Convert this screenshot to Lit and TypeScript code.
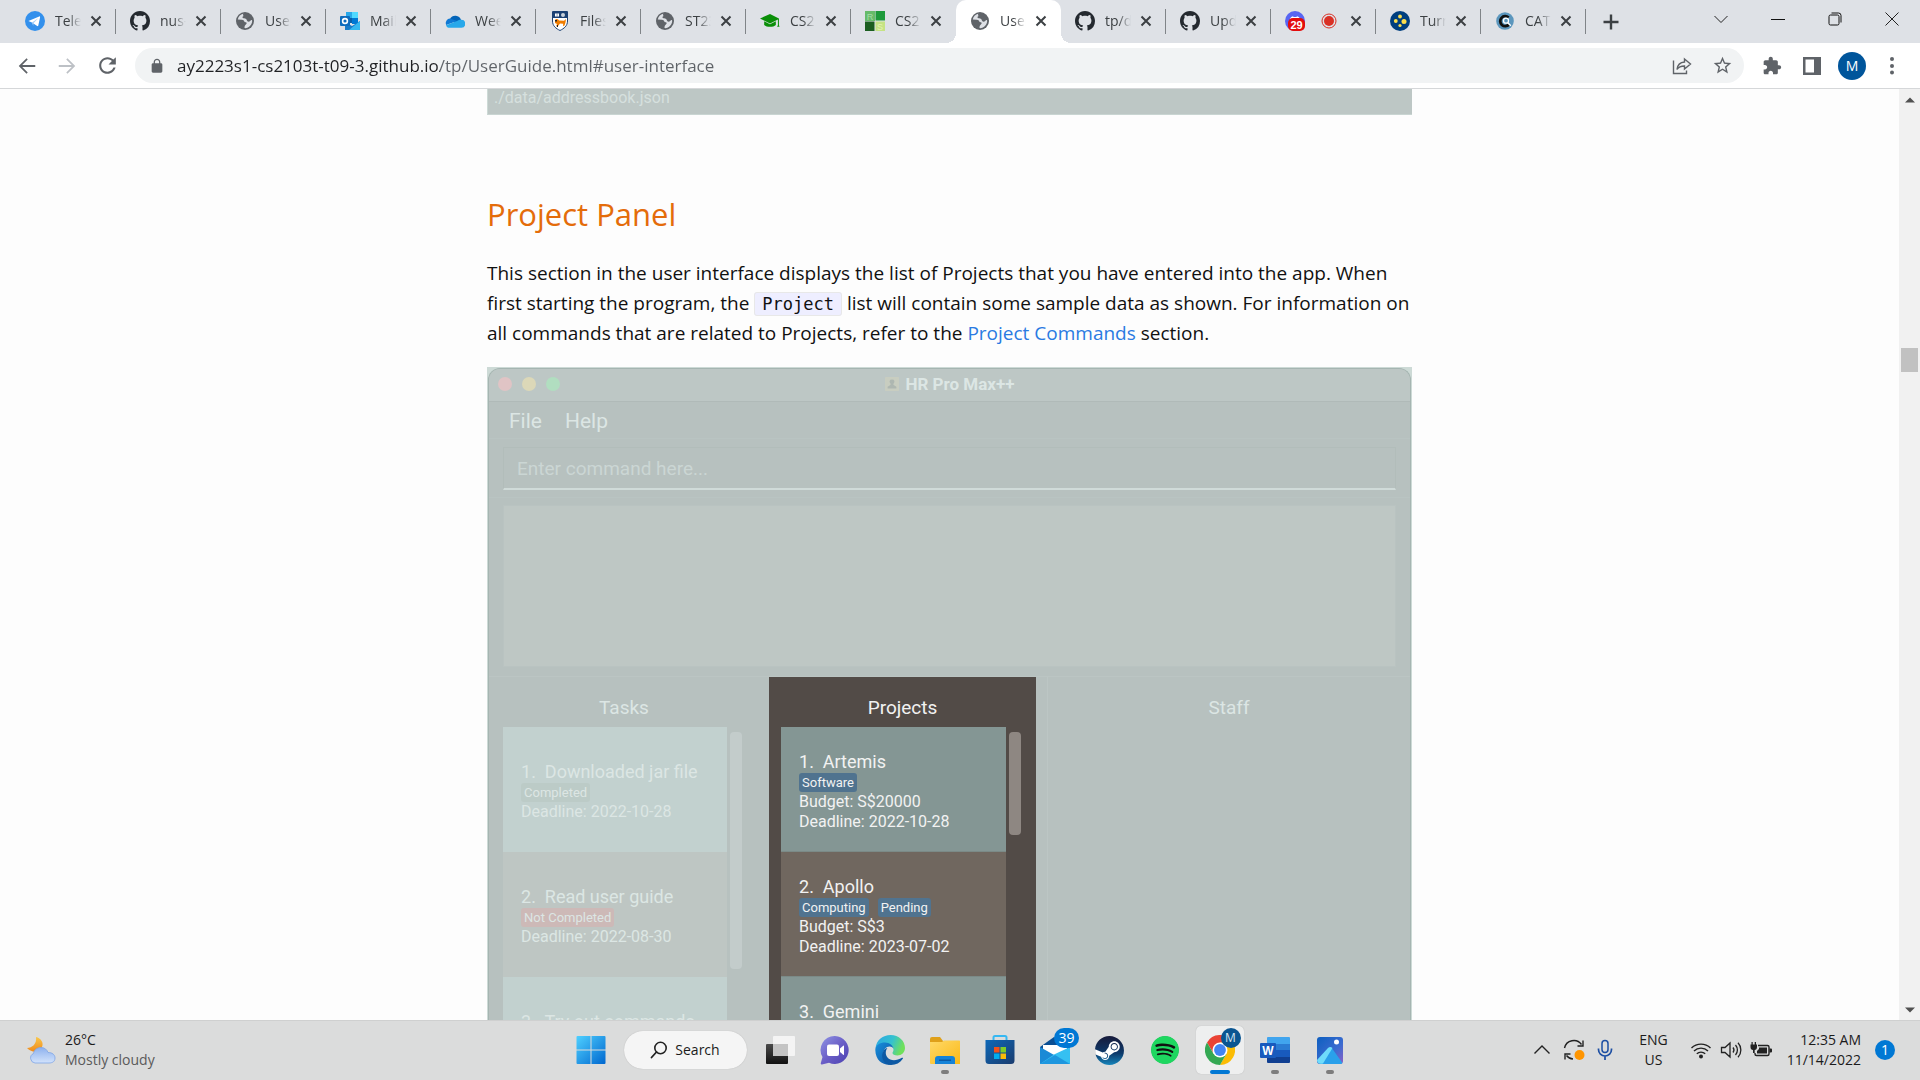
import { LitElement, html, svg, css, nothing, TemplateResult } from "lit";
import { customElement } from "lit/decorators.js";
import { classMap } from "lit/directives/class-map.js";

const icon = (box: string, w: number, h: number, body: unknown) =>
  html`<svg viewBox=${box} width=${w} height=${h} aria-hidden="true">${body}</svg>`;

/* ---------- favicons ---------- */

const github = icon("0 0 16 16", 20, 20, svg`<path fill="#24292f" d="M8 0C3.58 0 0 3.58 0 8c0 3.54 2.29 6.53 5.47 7.59.4.07.55-.17.55-.38 0-.19-.01-.82-.01-1.49-2.01.37-2.53-.49-2.69-.94-.09-.23-.48-.94-.82-1.13-.28-.15-.68-.52-.01-.53.63-.01 1.08.58 1.23.82.72 1.21 1.87.87 2.33.66.07-.52.28-.87.51-1.07-1.78-.2-3.64-.89-3.64-3.95 0-.87.31-1.59.82-2.15-.08-.2-.36-1.02.08-2.12 0 0 .67-.21 2.2.82.64-.18 1.32-.27 2-.27s1.36.09 2 .27c1.53-1.04 2.2-.82 2.2-.82.44 1.1.16 1.92.08 2.12.51.56.82 1.27.82 2.15 0 3.07-1.87 3.75-3.65 3.95.29.25.54.73.54 1.48 0 1.07-.01 1.93-.01 2.2 0 .21.15.46.55.38A8.01 8.01 0 0 0 16 8c0-4.42-3.58-8-8-8z"/>`);

const globe = icon("0 0 20 20", 20, 20, svg`
  <circle cx="10" cy="10" r="9" fill="#5f6368"/>
  <path fill="#dee1e6" d="M8.300 2.800C5.400 3.500 3.200 5.800 2.800 8.600l4 .2c1.700.1 2.700 1 2.700 2.300l1.300.1c.9.100 1 .9.700 1.500l-1.300 1.500c-.5.600-.7 1.200-.7 2.900 1.900.3 4.300-.6 5.600-2.300 1.600-1.900 2.300-3.700 2-5.600-.9-.4-1.300.1-1.900.7-1 1.100-2.500 1-3.100-.1l-.9-1.700c-.5-.8-1.900-.8-2.600-.9-1.400-.2-1.500-1.800-.1-2 .6-.1.900-.6.700-1.200z"/>
  <path fill="#5f6368" d="M8 3c2-.6 5 .1 6.500 1.700-.4 1.300-1.500 1.500-2.500 1.300-1.200-.2-2.200.3-3.500-.2z"/>`);

const telegram = icon("0 0 20 20", 20, 20, svg`
  <circle cx="10" cy="10" r="10" fill="#3390ec"/>
  <path fill="#fff" d="M3.400 9.900 14.200 5.400c.6-.2 1 .1.900.8l-1.800 8.400c-.1.600-.6.800-1.100.5L6.900 11.400z"/>
  <path fill="#a9cff5" d="m6.900 11.400 6.300-4.100-4.700 4.900-.3 2.700z"/>`);

const outlook = icon("0 0 20 20", 20, 20, svg`
  <path fill="#0a5ea8" d="M6 1h12v11H6z"/><path fill="#28a8ea" d="M6 1h6v6H6z"/><path fill="#50d9ff" d="M12 1h6v6h-6z"/>
  <path fill="#0078d4" d="M12 7h6v6h-6z"/><path fill="#1a7cc9" d="M5 11l7 4 8-5v8a1 1 0 0 1-1 1H5z"/><path fill="#35b8f1" d="M20 10v8a1 1 0 0 1-1 1H9z"/>
  <rect y="5" width="10" height="10" rx="1" fill="#0f6cbd"/><circle cx="5" cy="10" r="2.400" fill="none" stroke="#fff" stroke-width="1.600"/>`);

const onedrive = icon("0 0 20 20", 20, 20, svg`
  <path fill="#0364b8" d="M5 8a6 6 0 0 1 11 1l-5 4z"/><path fill="#0f78d4" d="M5 7.600A4.500 4.500 0 0 0 1.200 14L12 10z"/>
  <path fill="#28a8ea" d="M1 14.300C2 17 4 16.800 5 16.800h11a4 4 0 0 0 .5-8c-1.900-.1-3 .4-4.500 1.200z"/>`);

const crest = icon("0 0 20 20", 20, 20, svg`
  <path fill="#fff" stroke="#1c4173" d="M2.500.5h15V10c0 5-3.500 7.500-7.500 9.500C6 17.500 2.500 15 2.500 10z"/>
  <path fill="#1c4173" d="M3 1h14v6H3z"/><path fill="#fff" d="M5 2.500h4v3H5z"/><circle cx="13" cy="4" r="2" fill="#c9d1db"/><path fill="#1c4173" d="M6.800 2.500h.5v3h-.5z"/>
  <path fill="#ef7c00" d="M5 9c1-1.500 3-1 4 .5l5 .2 2-1.700-.5 3.500-1 3-1.500.8.200-2.500-3.200-.3-2 2.500-2 .5 1-2.500L5 12z"/><path fill="#222" d="M5 9h2v1.500H5zM7 14h1v2H7z"/>`);

const cap = icon("0 0 24 24", 20, 20, svg`<path fill="#0a8f08" d="M5 12.200v4.500c3 3 11 3 14 0v-4.500l-7 3.600zM12 3.500 0 9l12 6 9.500-4.700V17l-1 2h3l-.8-2V9z"/>`);

const rs = icon("0 0 20 20", 20, 20, svg`
  <path fill="#66bb6a" d="M0 0h10v10H0z"/><path fill="#1e9a3b" d="M10.500 0H20v9.500h-9.500z"/><path fill="#1b5e20" d="M0 10.500h9.500V20H0z"/><path fill="#c5e384" d="M10.500 10.500H20V20h-9.500z"/>
  <text x="5" y="8.500" font-family="Liberation Sans" font-size="9" text-anchor="middle" fill="#a5dba8">R</text><text x="15" y="18.500" font-family="Liberation Sans" font-size="9" text-anchor="middle" fill="#e6f3b5">S</text>`);

const discord = icon("0 0 20 20", 20, 20, svg`
  <circle cx="10" cy="10" r="10" fill="#5865f2"/><path fill="#fff" d="M5 9c0-2 1-3.500 3-3.800l.6.900h2.800l.6-.9c2 .3 3 1.800 3 3.800z"/>
  <rect x="3" y="7" width="17" height="13" rx="5" fill="#e40d0d"/><text x="11.500" y="17.500" font-family="Liberation Sans" font-weight="bold" font-size="11" text-anchor="middle" fill="#fff">29</text>`);

const turnitin = icon("0 0 20 20", 20, 20, svg`
  <circle cx="10" cy="10" r="10" fill="#003f7f"/><g fill="#fcdf4d"><circle cx="10" cy="5.500" r="1.900"/><circle cx="5.800" cy="10" r="1.900"/><circle cx="14" cy="10.500" r="2.500"/><circle cx="10" cy="14.500" r="1.600"/></g>`);

const catme = icon("0 0 20 20", 20, 20, svg`
  <circle cx="10" cy="10" r="8.800" fill="#5b96bd"/><path d="M13.600 6.500A5 5 0 1 0 14 13.500" fill="none" stroke="#111" stroke-width="2.800"/>
  <circle cx="11" cy="9.700" r="2.500" fill="#5b96bd" stroke="#fff" stroke-width="1.300"/><path stroke="#fff" stroke-width="1.500" d="m12.800 11.700 3 3"/>`);

const record = icon("0 0 16 16", 16, 16, svg`<circle cx="8" cy="8" r="7" fill="none" stroke="#d93025"/><circle cx="8" cy="8" r="5" fill="#d93025"/>`);

const closeX = icon("0 0 12 12", 12, 12, svg`<path d="M1.500 1.500l9 9M10.500 1.500l-9 9" stroke="#3c4043" stroke-width="2"/>`);

/* ---------- toolbar icons ---------- */

const m24 = (d: string, size: number, fill = "#5f6368") => icon("0 0 24 24", size, size, svg`<path fill=${fill} d=${d}/>`);
const back = m24("M21 11H6.800l6-6L11.500 3.600 3 12l8.500 8.400 1.300-1.400-6-6H21z", 22);
const forward = m24("M3 11h14.200l-6-6 1.300-1.400L21 12l-8.500 8.400-1.300-1.400 6-6H3z", 22, "#bdc1c6");
const reload = m24("M17.65 6.35C16.2 4.9 14.21 4 12 4c-4.42 0-7.99 3.58-7.99 8s3.57 8 7.99 8c3.73 0 6.84-2.55 7.73-6h-2.08c-.82 2.33-3.04 4-5.65 4-3.31 0-6-2.69-6-6s2.69-6 6-6c1.66 0 3.14.69 4.22 1.78L13 11h7V4l-2.35 2.35z", 25);
const lock = m24("M18 8h-1V6c0-2.76-2.24-5-5-5S7 3.24 7 6v2H6c-1.1 0-2 .9-2 2v10c0 1.1.9 2 2 2h12c1.1 0 2-.9 2-2V10c0-1.1-.9-2-2-2zM15.1 8H8.9V6c0-1.71 1.39-3.1 3.1-3.1s3.1 1.39 3.1 3.1v2z", 16);
const star = m24("M22 9.24l-7.19-.62L12 2 9.19 8.63 2 9.24l5.46 4.73L5.82 21 12 17.27 18.18 21l-1.63-7.03L22 9.24zM12 15.4l-3.76 2.27 1-4.28-3.32-2.88 4.38-.38L12 6.1l1.71 4.04 4.38.38-3.32 2.88 1 4.28L12 15.4z", 21);
const puzzle = m24("M20.5 11H19V7c0-1.1-.9-2-2-2h-4V3.500C13 2.120 11.880 1 10.500 1S8 2.120 8 3.500V5H4c-1.100 0-1.990.9-1.990 2v3.800H3.500c1.490 0 2.700 1.210 2.700 2.700s-1.210 2.700-2.700 2.700H2V20c0 1.100.9 2 2 2h3.800v-1.500c0-1.490 1.210-2.700 2.700-2.700 1.490 0 2.700 1.210 2.700 2.700V22H17c1.100 0 2-.9 2-2v-4h1.500c1.380 0 2.500-1.120 2.500-2.500S21.880 11 20.500 11z", 20);
const share = icon("0 0 20 20", 20, 20, svg`<path d="M1.500 4.500v13h13v-3M12.500 3l6 5-6 5v-3C9 10 6.500 11 5 13.500 5.500 9 8 6.300 12.500 6z" fill="none" stroke="#5f6368" stroke-width="1.400"/>`);
const sidePanel = icon("0 0 18 18", 18, 18, svg`<path fill="#5f6368" fill-rule="evenodd" d="M0 0h18v18H0zM2.500 2.500v13h8.500v-13z"/>`);
const dots = icon("0 0 4 18", 4, 18, svg`<g fill="#5f6368"><circle cx="2" cy="2" r="2"/><circle cx="2" cy="9" r="2"/><circle cx="2" cy="15.500" r="2"/></g>`);
const plus = icon("0 0 16 16", 16, 16, svg`<path d="M8 .5v15M.5 8h15" stroke="#3c4043" stroke-width="2.400"/>`);

const winDown = icon("0 0 14 14", 14, 14, svg`<path d="M.5 4 7 10.500 13.500 4" fill="none" stroke="#222"/>`);
const winMin = icon("0 0 14 14", 14, 14, svg`<path d="M0 7.500h14" stroke="#111"/>`);
const winMax = icon("0 0 14 14", 14, 14, svg`<rect x="1" y="3" width="10" height="10" rx="1.500" fill="none" stroke="#111"/><path d="M3.500 1h7a2.500 2.500 0 0 1 2.500 2.500v7" fill="none" stroke="#111"/>`);
const winClose = icon("0 0 14 14", 14, 14, svg`<path d="m.5.5 13 13M13.500.5l-13 13" stroke="#222"/>`);

/* ---------- taskbar icons ---------- */

const weather = icon("0 0 30 28", 30, 28, svg`
  <defs><linearGradient id="moon" x1="0" y1="0" x2="0" y2="1"><stop offset="0" stop-color="#f9c74a"/><stop offset="1" stop-color="#ef8a1d"/></linearGradient>
  <linearGradient id="cloud" x1="0" y1="0" x2="0" y2="1"><stop offset="0" stop-color="#8db1ee"/><stop offset="1" stop-color="#d3e3fb"/></linearGradient></defs>
  <path fill="url(#moon)" d="M10 1c5 1 8 6 6 10-2 5-9 7-15 1 5 0 10-4 9-11z"/>
  <path fill="url(#cloud)" stroke="#7ea4e6" stroke-width=".8" d="M9 27a5 5 0 0 1-1.500-9.500C8 14 11 11.500 15 11.500c3.500 0 6 2 7 5 4 0 7 2 7 5.500S26.500 27 23 27z"/>`);

const start = icon("0 0 30 30", 30, 30, svg`
  <defs><linearGradient id="win" x1="0" y1="0" x2="1" y2="1"><stop offset="0" stop-color="#4fd0ff"/><stop offset="1" stop-color="#0067cf"/></linearGradient></defs>
  <path fill="url(#win)" d="M.5 2a1 1 0 0 1 1-1h13v13.500H.5zM15.500 1h13a1 1 0 0 1 1 1v12.500h-14zM.5 15.500h14V29h-13a1 1 0 0 1-1-1zM15.500 15.500h14V28a1 1 0 0 1-1 1h-13z"/>`);

const magnifier = icon("0 0 18 18", 18, 18, svg`<circle cx="10.500" cy="7" r="5.700" fill="none" stroke="#222" stroke-width="1.600"/><path d="M6.500 11 1.500 16.500" stroke="#222" stroke-width="1.800" stroke-linecap="round"/>`);

const taskView = icon("0 0 30 30", 30, 30, svg`
  <defs><linearGradient id="tv" x1="0" y1="0" x2="0" y2="1"><stop offset="0" stop-color="#4a4a4a"/><stop offset="1" stop-color="#111"/></linearGradient></defs>
  <rect x="1" y="9" width="22" height="20" rx="1" fill="url(#tv)"/><rect x="8" y="1" width="22" height="20" rx="1" fill="#f4f4f4"/><path fill="#c4c4c4" d="M8 9h15v12H8z"/>`);

const chat = icon("0 0 30 30", 30, 30, svg`
  <defs><linearGradient id="chat" x1="0" y1="0" x2="1" y2="1"><stop offset="0" stop-color="#8f94e4"/><stop offset=".5" stop-color="#6b5fc7"/><stop offset="1" stop-color="#4a3fb0"/></linearGradient></defs>
  <path fill="url(#chat)" d="M15 1a14 14 0 1 1-6 26.800L2 29.500c-1 .2-1.500-.5-1.200-1.400L2.500 22A14 14 0 0 1 15 1z"/>
  <rect x="7" y="9.500" width="12" height="11.500" rx="2" fill="#fff"/><path fill="#fff" d="m20 13.500 3.200-2.800c.4-.3.8-.1.800.4v8.300c0 .5-.4.700-.8.400L20 17z"/>`);

const edge = icon("0 0 30 30", 30, 30, svg`
  <defs><linearGradient id="ea" x1="0" y1="0" x2="1" y2=".3"><stop offset="0" stop-color="#2aa6e4"/><stop offset=".6" stop-color="#35c1cf"/><stop offset="1" stop-color="#6fe05b"/></linearGradient>
  <linearGradient id="eb" x1="0" y1="0" x2="1" y2="1"><stop offset="0" stop-color="#1790dd"/><stop offset="1" stop-color="#0d4f9e"/></linearGradient></defs>
  <path fill="url(#ea)" d="M.5 13C1.500 5 8 0 15.500 0 24 0 30 6 30 13c0 4.500-3.500 7.500-7.500 7.500-3 0-5-1-5-2.500 0-1 1-1.500 1-3.500 0-3-3-5.500-7-5.500-5 0-9 1-11 4z"/>
  <path fill="url(#eb)" d="M.3 15C.3 10 5 7.500 10 7.500c4.500 0 8.500 3 8.500 7 0-1.800-2-3-4-3-3.500 0-6 3-6 7 0 6 5 9.500 11 9.500-6 4-19 1-19.200-13z"/>
  <path fill="#0c59a4" d="M12.500 13c-2 2-2.500 6.500 0 9.500 3 3.500 9 3.500 14.500.3.800-.3 1.300.3.800 1C25 28 21 30 16 30c-6 0-11-7-8-13 1-2.500 3-4 4.500-4z"/>`);

const folder = icon("0 0 30 30", 30, 30, svg`
  <defs><linearGradient id="fo" x1="0" y1="0" x2="1" y2="1"><stop offset="0" stop-color="#ffd968"/><stop offset="1" stop-color="#fbb917"/></linearGradient></defs>
  <path fill="#dfa01a" d="M0 4a2 2 0 0 1 2-2h8l3 4h10v5H0z"/><path fill="url(#fo)" d="M0 7h12l2-1.500h15a1.500 1.500 0 0 1 1.500 1.500v21a1 1 0 0 1-1 1H1a1 1 0 0 1-1-1z"/>
  <path fill="#1583d8" d="M5 29v-5a3 3 0 0 1 3-3h14a3 3 0 0 1 3 3v5z"/><path fill="#0b5aa5" d="M9 24.500h12v1.500H9z"/>`);

const store = icon("0 0 30 30", 30, 30, svg`
  <defs><linearGradient id="st" x1="0" y1="0" x2="1" y2="1"><stop offset="0" stop-color="#0d68b8"/><stop offset="1" stop-color="#1b3c6e"/></linearGradient></defs>
  <path d="M8.500 7V2.500A1.500 1.500 0 0 1 10 1h10a1.500 1.500 0 0 1 1.500 1.500V7" fill="none" stroke="#36b8f2" stroke-width="2"/>
  <path fill="url(#st)" d="M.5 5h29v20.500A3.500 3.500 0 0 1 26 29H4a3.500 3.500 0 0 1-3.500-3.500z"/>
  <path fill="#f1511b" d="M9 12h5.500v5.500H9z"/><path fill="#80cc28" d="M15.500 12H21v5.500h-5.500z"/><path fill="#00adef" d="M9 18.500h5.500V24H9z"/><path fill="#fbbc09" d="M15.500 18.500H21V24h-5.500z"/>`);

const mail = icon("0 0 30 30", 30, 30, svg`
  <path fill="#0a4f94" d="M0 12 14 2l16 10v4H0z"/><path fill="#fff" d="M3 10h24v10H3z"/><path fill="#1b8ad6" d="M0 12v17h30z"/><path fill="#35c0f2" d="M30 12v17H0l14-9.500z"/><path fill="#1e97df" d="m15 20 15 9H0z"/>`);

const steam = icon("0 0 24 24", 29, 29, svg`
  <defs><linearGradient id="sm" x1="0" y1="0" x2="0" y2="1"><stop offset="0" stop-color="#171a3a"/><stop offset=".6" stop-color="#0d3a6b"/><stop offset="1" stop-color="#1585bb"/></linearGradient></defs>
  <circle cx="12" cy="12" r="11.500" fill="#fff"/>
  <path fill="url(#sm)" d="M11.979 0C5.678 0 .511 4.860.022 11.037l6.432 2.658c.545-.371 1.203-.59 1.912-.59.063 0 .125.004.188.006l2.861-4.142V8.910c0-2.495 2.028-4.524 4.524-4.524 2.494 0 4.524 2.031 4.524 4.527s-2.030 4.525-4.524 4.525h-.105l-4.076 2.911c0 .052.004.105.004.159 0 1.875-1.515 3.396-3.390 3.396-1.635 0-3.016-1.173-3.331-2.727L.436 15.270C1.862 20.307 6.486 24 11.979 24c6.627 0 11.999-5.373 11.999-12S18.605 0 11.979 0zM7.540 18.210l-1.473-.61c.262.543.714.999 1.314 1.250 1.297.539 2.793-.076 3.332-1.375.263-.63.264-1.319.005-1.949s-.75-1.121-1.377-1.383c-.624-.26-1.290-.249-1.878-.03l1.523.63c.956.4 1.409 1.500 1.009 2.455-.397.957-1.497 1.410-2.454 1.012H7.540zm11.415-9.303c0-1.662-1.353-3.015-3.015-3.015-1.665 0-3.015 1.353-3.015 3.015 0 1.665 1.350 3.015 3.015 3.015 1.663 0 3.015-1.350 3.015-3.015zm-5.273-.005c0-1.252 1.013-2.266 2.265-2.266 1.249 0 2.266 1.014 2.266 2.266 0 1.251-1.017 2.265-2.266 2.265-1.253 0-2.265-1.014-2.265-2.265z"/>`);

const spotify = icon("0 0 24 24", 28, 28, svg`<circle cx="12" cy="12" r="11.500" fill="#111"/>
  <path fill="#1ed760" d="M12 0C5.400 0 0 5.400 0 12s5.400 12 12 12 12-5.400 12-12S18.660 0 12 0zm5.521 17.340c-.24.359-.66.480-1.021.240-2.820-1.740-6.360-2.101-10.561-1.141-.418.122-.779-.179-.899-.539-.12-.421.180-.780.540-.9 4.560-1.021 8.520-.6 11.640 1.320.420.180.479.659.301 1.020zm1.440-3.300c-.301.420-.841.6-1.262.3-3.239-1.980-8.159-2.580-11.939-1.380-.479.120-1.020-.12-1.140-.6-.12-.48.120-1.021.6-1.141C9.600 9.900 15 10.561 18.720 12.840c.361.181.540.780.241 1.200zm.12-3.360C15.240 8.400 8.820 8.160 5.160 9.301c-.6.179-1.200-.181-1.380-.721-.18-.601.180-1.200.72-1.381 4.260-1.260 11.280-1.020 15.721 1.621.539.3.719 1.020.419 1.560-.299.421-1.020.599-1.559.3z"/>`);

const chrome = icon("0 0 30 30", 30, 30, svg`
  <path fill="#ea4335" d="M2 7.500a15 15 0 0 1 26 0H15l-6.500 11z"/><path fill="#fbbc04" d="M28 7.500A15 15 0 0 1 15 30l6.500-11.200L15 7.500z"/><path fill="#34a853" d="M15 30A15 15 0 0 1 2 7.500l6.500 11.300h13z"/>
  <circle cx="15" cy="15" r="7.500" fill="#fff"/><circle cx="15" cy="15" r="5.900" fill="#4285f4"/>`);

const word = icon("0 0 30 30", 30, 30, svg`
  <path fill="#41a5ee" d="M7 3a1 1 0 0 1 1-1h21a1 1 0 0 1 1 1v6H7z"/><path fill="#2b7cd3" d="M7 9h23v6H7z"/><path fill="#185abd" d="M7 15h23v7H7z"/><path fill="#103f91" d="M7 22h23v5a1 1 0 0 1-1 1H8a1 1 0 0 1-1-1z"/>
  <rect y="8" width="16" height="15" rx="1" fill="#185abd"/><text x="8" y="20" font-family="Liberation Sans" font-size="12" font-weight="bold" text-anchor="middle" fill="#fff">W</text>`);

const photos = icon("0 0 30 30", 30, 30, svg`
  <defs><linearGradient id="ph" x1="0" y1="0" x2="1" y2="1"><stop offset="0" stop-color="#0e5fc0"/><stop offset=".6" stop-color="#3b6bd0"/><stop offset="1" stop-color="#8b5fc6"/></linearGradient></defs>
  <rect x="2" y="2" width="26" height="27" rx="3" fill="url(#ph)"/><path fill="#2aa0ea" d="M4 28 14 14c1-1.500 2.500-1.500 3.500 0l10 14c-1 1-1.500 1-2.500 1H5c-.5 0-1-.5-1-1z"/><path fill="#6fdcfb" d="M2 25 13 13c1.500-1.500 3-1.500 4.500 0L8 28.500c-4 1-6-.5-6-3.500z"/><circle cx="21.500" cy="7" r="2.500" fill="#fff"/>`);

const chevUp = icon("0 0 18 18", 18, 18, svg`<path d="m1.500 12.500 7.500-7.500 7.500 7.500" fill="none" stroke="#222" stroke-width="1.400"/>`);
const sync = icon("0 0 22 22", 22, 22, svg`<path d="M1.500 9A9.500 9.500 0 0 1 18.500 5.500M20 1.500v5.500h-5.500M2 20.500V15h5.500M3.500 16.500A9 9 0 0 0 10 20" fill="none" stroke="#222" stroke-width="1.400"/><circle cx="16.500" cy="16" r="5" fill="#ff9500"/>`);
const mic = icon("0 0 16 22", 16, 22, svg`<rect x="5" y="1.500" width="6" height="12" rx="3" fill="none" stroke="#1d4fa3" stroke-width="1.500"/><path d="M1.500 9.500v1a6.500 6.500 0 0 0 13 0v-1M8 17v4" fill="none" stroke="#1d4fa3" stroke-width="1.700"/>`);
const wifi = icon("0 0 22 18", 22, 18, svg`<g fill="none" stroke="#222" stroke-width="1.400"><path d="M1.500 7a13.500 13.500 0 0 1 19 0M4 10a10 10 0 0 1 14 0M6.800 12.800a6 6 0 0 1 8.400 0"/></g><circle cx="11" cy="15.500" r="2" fill="#222"/>`);
const speaker = icon("0 0 22 18", 22, 18, svg`<g fill="none" stroke="#222" stroke-width="1.300"><path d="M1.500 6.500h3.500l5-4.500v14l-5-4.500H1.500zM13 6.500a4 4 0 0 1 0 5M15.500 4a7.500 7.500 0 0 1 0 10M18 1.800a10.500 10.500 0 0 1 0 14.400"/></g>`);
const battery = icon("0 0 22 18", 22, 18, svg`<path d="M8 4.500h9.500a1.500 1.500 0 0 1 1.500 1.500v7a1.500 1.500 0 0 1-1.500 1.500H6.500a1.500 1.500 0 0 1-1.500-1.500v-1" fill="none" stroke="#222" stroke-width="1.400"/><path fill="#222" d="M9 6.500h8v6H7V10l2-2zM19.500 7.500h1.500a1 1 0 0 1 1 1v2a1 1 0 0 1-1 1h-1.500zM1.500 1h1.200v2.500h2V1H6v2.500h1V6c0 2-1 2.800-2.300 3v3H3V9C1.500 8.800.5 8 .5 6V3.500h1z"/>`);
const addressBook = icon("0 0 16 16", 14, 14, svg`<rect width="16" height="16" rx="1" fill="#c8cdc0"/><path fill="#aeb7b1" d="M8 3a2.300 2.300 0 0 1 2 4c-.6.800-.5 2 .3 2.500L13 11v2H3v-2l2.700-1.500c.8-.5.900-1.700.3-2.500A2.300 2.300 0 0 1 8 3z"/>`);

interface Tab { title: string; icon: TemplateResult; active?: boolean; recording?: boolean }
const tabs: Tab[] = [
  { title: "Telegram", icon: telegram },
  { title: "nus-cs2103", icon: github },
  { title: "User Guide", icon: globe },
  { title: "Mail", icon: outlook },
  { title: "Week 13", icon: onedrive },
  { title: "Files", icon: crest },
  { title: "ST2334", icon: globe },
  { title: "CS2103", icon: cap },
  { title: "CS2103", icon: rs },
  { title: "User Guide", icon: globe, active: true },
  { title: "tp/docs", icon: github },
  { title: "Update", icon: github },
  { title: "", icon: discord, recording: true },
  { title: "Turnitin", icon: turnitin },
  { title: "CATME", icon: catme },
];

interface Entry { name: string; tags: string[]; lines: string[]; alert?: boolean }
const tasks: Entry[] = [
  { name: "Downloaded jar file", tags: ["Completed"], lines: ["Deadline: 2022-10-28"] },
  { name: "Read user guide", tags: ["Not Completed"], lines: ["Deadline: 2022-08-30"], alert: true },
  { name: "Try out commands", tags: ["Not Completed"], lines: ["Deadline: 2022-11-30"], alert: true },
];
const projects: Entry[] = [
  { name: "Artemis", tags: ["Software"], lines: ["Budget: S$20000", "Deadline: 2022-10-28"] },
  { name: "Apollo", tags: ["Computing", "Pending"], lines: ["Budget: S$3", "Deadline: 2023-07-02"] },
  { name: "Gemini", tags: ["Software"], lines: ["Budget: S$100", "Deadline: 2023-01-01"] },
];

interface App { name: string; icon: TemplateResult; state?: "open" | "active"; badge?: string }
const apps: App[] = [
  { name: "Task View", icon: taskView },
  { name: "Chat", icon: chat },
  { name: "Edge", icon: edge },
  { name: "File Explorer", icon: folder, state: "open" },
  { name: "Store", icon: store },
  { name: "Mail", icon: mail, badge: "39" },
  { name: "Steam", icon: steam },
  { name: "Spotify", icon: spotify },
  { name: "Chrome", icon: chrome, state: "active", badge: "M" },
  { name: "Word", icon: word, state: "open" },
  { name: "Photos", icon: photos, state: "open" },
];

const reset = css`
  *, *::before, *::after { box-sizing: border-box; }
  button { border: 0; padding: 0; background: none; font: inherit; color: inherit; display: flex; align-items: center; justify-content: center; }
  input, textarea { border: 0; padding: 0; margin: 0; outline: 0; background: none; font: inherit; }
  svg { display: block; flex: none; }
`;

@customElement("browser-chrome")
class BrowserChrome extends LitElement {
  static styles = [reset, css`
    :host { display: block; font-family: "Open Sans", "Noto Sans", sans-serif; color: #3c4043; }
    .strip { display: flex; align-items: flex-start; height: 43px; padding-left: 11px; background: #dee1e6; }
    .tab { position: relative; display: flex; align-items: center; width: 105px; height: 43px; padding: 0 0 1px 14px; font-size: 14px; line-height: 20px; }
    .tab::after { content: ""; position: absolute; right: 0; top: 9px; width: 1px; height: 25px; background: #808488; }
    .tab.plain::after { display: none; }
    .tab.active { background: #fff; border-radius: 10px 10px 0 0; }
    .tab.active::before, .tab.active::after { content: ""; display: block; position: absolute; top: auto; bottom: 0; width: 10px; height: 10px; }
    .tab.active::before { left: -10px; background: radial-gradient(circle at 0 0, transparent 10px, #fff 10px); }
    .tab.active::after { right: -10px; background: radial-gradient(circle at 100% 0, transparent 10px, #fff 10px); }
    .label { width: 26px; margin: 0 7px 0 10px; overflow: hidden; white-space: nowrap; -webkit-mask-image: linear-gradient(90deg, #000 50%, transparent); mask-image: linear-gradient(90deg, #000 50%, transparent); }
    .recording { margin: 0 11px 0 16px; }
    .close { width: 16px; height: 20px; }
    .new { width: 32px; height: 43px; margin-left: 9px; }
    .window { display: flex; margin-left: auto; }
    .window button { width: 57px; height: 37px; }
    .bar { display: flex; align-items: center; height: 45px; padding: 0 8px 0 7px; background: #fff; }
    .nav { width: 40px; height: 40px; }
    .omnibox { flex: 1; display: flex; align-items: center; height: 35px; margin: 0 8px; padding: 0 2px 0 14px; border-radius: 18px; background: #f1f3f4; }
    .url { flex: 1; min-width: 0; margin-left: 12px; font-size: 17px; line-height: 24px; color: #5f6368; background: linear-gradient(90deg, #202124 263px, #5f6368 263px); -webkit-background-clip: text; background-clip: text; -webkit-text-fill-color: transparent; }
    .inner { width: 40px; height: 30px; }
    .ext { width: 40px; height: 40px; }
    .avatar { width: 28px; height: 28px; margin: 0 6px; border-radius: 50%; background: #00559b; color: #fff; font-size: 14px; }
  `];
  render() {
    return html`
      <div class="strip" role="tablist">
        ${tabs.map((t, i) => html`
          <div class=${classMap({ tab: true, active: !!t.active, plain: !!tabs[i + 1]?.active })} role="tab">
            ${t.icon}
            ${t.recording ? html`<span class="recording">${record}</span>` : html`<span class="label">${t.title}</span>`}
            <button class="close" aria-label="Close tab">${closeX}</button>
          </div>`)}
        <button class="new" aria-label="New tab">${plus}</button>
        <div class="window">
          <button aria-label="Search tabs">${winDown}</button>
          <button aria-label="Minimise">${winMin}</button>
          <button aria-label="Restore">${winMax}</button>
          <button aria-label="Close">${winClose}</button>
        </div>
      </div>
      <div class="bar">
        <button class="nav" aria-label="Back">${back}</button>
        <button class="nav" aria-label="Forward">${forward}</button>
        <button class="nav" aria-label="Reload">${reload}</button>
        <div class="omnibox">
          ${lock}
          <input class="url" aria-label="Address" .value=${"ay2223s1-cs2103t-t09-3.github.io/tp/UserGuide.html#user-interface"} />
          <button class="inner" aria-label="Share">${share}</button>
          <button class="inner" aria-label="Bookmark">${star}</button>
        </div>
        <button class="ext" aria-label="Extensions">${puzzle}</button>
        <button class="ext" aria-label="Side panel">${sidePanel}</button>
        <button class="avatar" aria-label="Profile">M</button>
        <button class="nav" aria-label="Menu">${dots}</button>
      </div>`;
  }
}

@customElement("hr-window")
class HrWindow extends LitElement {
  static styles = [reset, css`
    :host { display: block; padding: 1px 1px 0; background: #cddad6; font-family: Roboto, "Liberation Sans", sans-serif; color: #dce6e4; }
    .frame { border: 1px solid #a5b5b1; border-bottom: 0; border-radius: 12px 12px 0 0; overflow: hidden; background: #b7c1bf; }
    .title { display: grid; grid-template-columns: 1fr auto 1fr; align-items: center; height: 33px; padding: 0 8px 2px 9px; background: #bdc7c5; border-bottom: 1px solid #b0bab8; }
    .lights { display: flex; gap: 10px; }
    .light { width: 14px; height: 14px; border-radius: 50%; background: #e0c4c5; }
    .light.amber { background: #dcd8b8; }
    .light.green { background: #b1dec0; }
    .name { display: flex; align-items: center; gap: 6px; font-size: 17px; font-weight: 700; line-height: 20px; }
    .menu { display: flex; gap: 23px; height: 36px; padding: 2px 20px 0; font-size: 21px; line-height: 34px; }
    .command { padding: 8px 14px 7px; border: 1px solid #b9c4c2; border-width: 1px 0; }
    .command input { display: block; width: 100%; height: 43px; padding: 0 13px; border: 1px solid #b2bdba; border-bottom: 2px solid #d0dbd9; font-size: 19px; color: #dce6e4; }
    .command input::placeholder { color: #cbd6d4; opacity: 1; }
    .result { padding: 7px 14px 9px; border-bottom: 1px solid #bbc5c3; }
    .result textarea { display: block; width: 100%; height: 162px; resize: none; background: #bec7c4; border: 1px solid #b9c3c1; }
    .columns { display: grid; grid-template-columns: 268px 12px 267px 11px 1fr; }
    .panel { height: 420px; padding: 11px 12px 0 14px; }
    .panel.focus { grid-column: 3; padding-left: 12px; background: #524b47; color: #f2f2f2; }
    .panel.staff { grid-column: 5; padding-right: 14px; border-left: 1px solid #bcc6c4; }
    h3 { margin: 0; height: 39px; font-size: 19px; font-weight: 400; line-height: 40px; text-align: center; }
    .body { display: flex; gap: 3px; align-items: flex-start; }
    .list { flex: 1; margin: 0; padding: 0; list-style: none; }
    .card { display: flex; flex-direction: column; justify-content: center; align-items: flex-start; height: 125px; padding: 3px 18px 0; background: #c2d1cf; }
    .card.even { background: #bec6c3; }
    .focus .card { background: #849694; border-bottom: 1px solid #7b8a87; }
    .focus .card.even { background: #70675f; }
    .head { font-size: 18px; line-height: 23px; white-space: pre; }
    .tags { display: flex; gap: 9px; }
    .tag { padding: 0 3px; border-radius: 3px; background: #bccbc7; font-size: 13px; line-height: 19px; }
    .tag.alert { background: #cdb9b7; }
    .focus .tag { background: #50738f; }
    .line { font-size: 16px; line-height: 20px; }
    .thumb { width: 12px; height: 237px; margin: 5px 3px 0 0; border-radius: 4px; background: #c3cccb; }
    .focus .thumb { height: 103px; background: #8e8782; }
  `];
  private list(title: string, entries: Entry[], focus = false) {
    return html`
      <section class=${classMap({ panel: true, focus })}>
        <h3>${title}</h3>
        <div class="body">
          <ol class="list">
            ${entries.map((e, i) => html`
              <li class=${classMap({ card: true, even: i % 2 === 1 })}>
                <div class="head">${i + 1}.  ${e.name}</div>
                <div class="tags">${e.tags.map((t) => html`<span class=${classMap({ tag: true, alert: !!e.alert })}>${t}</span>`)}</div>
                ${e.lines.map((l) => html`<div class="line">${l}</div>`)}
              </li>`)}
          </ol>
          <div class="thumb"></div>
        </div>
      </section>`;
  }
  render() {
    return html`
      <div class="frame">
        <div class="title">
          <div class="lights"><span class="light"></span><span class="light amber"></span><span class="light green"></span></div>
          <div class="name">${addressBook}<span>HR Pro Max++</span></div>
        </div>
        <div class="menu"><button>File</button><button>Help</button></div>
        <div class="command"><input aria-label="Command" placeholder="Enter command here..." /></div>
        <div class="result"><textarea aria-label="Result" readonly></textarea></div>
        <div class="columns">
          ${this.list("Tasks", tasks)}
          ${this.list("Projects", projects, true)}
          <section class="panel staff"><h3>Staff</h3></section>
        </div>
      </div>`;
  }
}

@customElement("task-bar")
class TaskBar extends LitElement {
  static styles = [reset, css`
    :host { display: grid; grid-template-columns: 1fr auto 1fr; align-items: center; height: 60px; padding-bottom: 1px; border-top: 1px solid #cfd0d0; background: #dbdcdc; font-family: "Open Sans", "Noto Sans", sans-serif; font-size: 14px; line-height: 20px; color: #1b1b1b; box-sizing: border-box; }
    .weather { display: flex; gap: 9px; align-items: center; padding-left: 26px; }
    .muted { color: #5a5a5a; }
    .apps { display: flex; gap: 7px; align-items: center; }
    .app { position: relative; width: 48px; height: 48px; border-radius: 5px; }
    .app.active { background: #eeefef; box-shadow: 0 0 1px #aaa; }
    .app.open::after, .app.active::after { content: ""; position: absolute; bottom: 0; left: 20px; width: 8px; height: 4px; border-radius: 2px; background: #7d7d7d; }
    .app.active::after { left: 14px; width: 20px; background: #0078d4; }
    .badge { position: absolute; right: 0; top: 2px; min-width: 20px; height: 20px; padding: 0 4px; border-radius: 10px; background: #0078d4; color: #fff; font-size: 14px; line-height: 20px; text-align: center; }
    .active .badge { right: 3px; padding: 0; background: #0a5591; color: #d5e4f0; font-size: 12px; }
    .search { width: 123px; height: 38px; margin: 0 2px; gap: 7px; border-radius: 19px; background: #f5f5f5; box-shadow: 0 0 1px #aaa; }
    .tray { display: flex; align-items: center; justify-content: flex-end; padding-right: 25px; }
    .system { display: flex; gap: 12px; align-items: center; }
    .pair { margin-left: 26px; text-align: center; }
    .status { display: flex; gap: 8px; align-items: center; margin: 0 15px 0 22px; }
    .clock { text-align: right; }
    .notice { width: 20px; height: 20px; margin-left: 14px; border-radius: 50%; background: #0078d4; color: #fff; text-align: center; }
  `];
  render() {
    return html`
      <div class="weather">${weather}<div><div>26°C</div><div class="muted">Mostly cloudy</div></div></div>
      <div class="apps">
        <button class="app" aria-label="Start">${start}</button>
        <button class="search">${magnifier}<span>Search</span></button>
        ${apps.map((a) => html`
          <button class=${classMap({ app: true, open: a.state === "open", active: a.state === "active" })} aria-label=${a.name}>
            ${a.icon}${a.badge ? html`<span class="badge">${a.badge}</span>` : nothing}
          </button>`)}
      </div>
      <div class="tray">
        <div class="system">${chevUp}${sync}${mic}</div>
        <div class="pair"><div>ENG</div><div>US</div></div>
        <div class="status">${wifi}${speaker}${battery}</div>
        <div class="clock"><div>12:35 AM</div><div>11/14/2022</div></div>
        <span class="notice">1</span>
      </div>`;
  }
}

@customElement("app-root")
class AppRoot extends LitElement {
  static styles = [reset, css`
    :host { display: flex; flex-direction: column; height: 100vh; overflow: hidden; background: #fdfdfd; }
    .view { flex: 1; min-height: 0; display: flex; border-top: 1px solid #d5d7d9; }
    .page { flex: 1; min-width: 0; overflow: hidden; font-family: "Open Sans", "Noto Sans", sans-serif; color: #111; }
    .column { max-width: 925px; margin: 0 auto; }
    .previous { height: 26px; padding-left: 6px; border-left: 1px solid #cddad6; border-bottom: 1px solid #c9d5d2; background: #bdc7c5; color: #d6e0de; font-family: Roboto, "Liberation Sans", sans-serif; font-size: 16px; line-height: 18px; }
    h2 { margin: 75px 0 20px; font-size: 31px; font-weight: 400; line-height: 48px; color: #e46c0a; }
    p { margin: 0 0 19px; font-size: 19px; line-height: 30px; }
    a { color: #2a7ae2; text-decoration: none; }
    code { padding: 1px 7px; border: 1px solid #e8e8e8; border-radius: 3px; background: #eef; font-family: "DejaVu Sans Mono", monospace; font-size: 17px; line-height: 20px; }
    .scroll { display: flex; flex-direction: column; align-items: center; width: 21px; background: #f1f1f1; }
    .scroll button { width: 21px; height: 21px; }
    .track { flex: 1; padding-top: 238px; }
    .thumb { width: 17px; height: 24px; background: #c1c1c1; }
  `];
  render() {
    return html`
      <browser-chrome></browser-chrome>
      <main class="view">
        <div class="page">
          <div class="column">
            <div class="previous">./data/addressbook.json</div>
            <h2>Project Panel</h2>
            <p>This section in the user interface displays the list of Projects that you have entered into the app. When first starting the program, the <code>Project</code> list will contain some sample data as shown. For information on all commands that are related to Projects, refer to the <a href="#project-commands">Project Commands</a> section.</p>
            <hr-window></hr-window>
          </div>
        </div>
        <div class="scroll">
          <button aria-label="Scroll up">${icon("0 0 10 6", 10, 6, svg`<path fill="#505050" d="M0 5.500 5 .5l5 5z"/>`)}</button>
          <div class="track"><div class="thumb"></div></div>
          <button aria-label="Scroll down">${icon("0 0 10 6", 10, 6, svg`<path fill="#505050" d="M0 .5h10l-5 5z"/>`)}</button>
        </div>
      </main>
      <task-bar></task-bar>`;
  }
}
